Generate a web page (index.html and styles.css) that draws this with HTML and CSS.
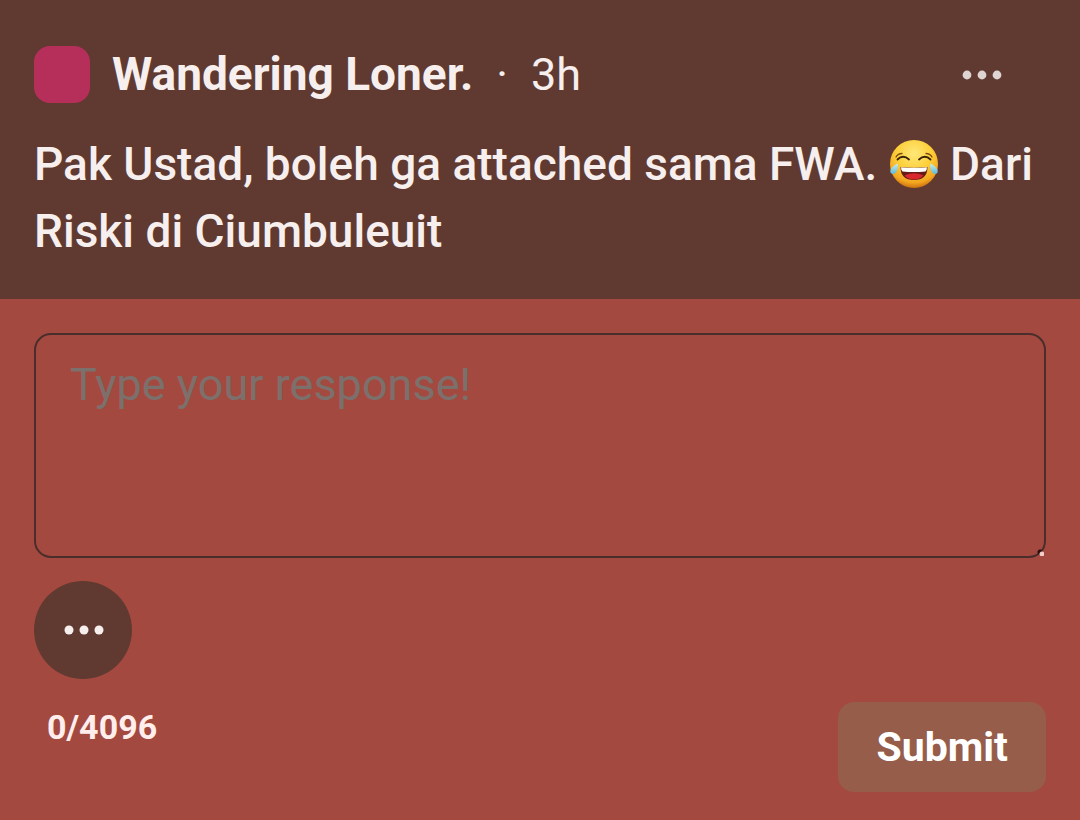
FILE: index.html
```
<!DOCTYPE html>
<html lang="id">
<head>
  <meta charset="UTF-8">
  <meta name="viewport" content="width=device-width, initial-scale=1.0">
  <title>Wandering Loner.</title>
  <link rel="stylesheet" href="styles.css">
</head>
<body>
  <article class="message">
    <header class="message-header">
      <span class="avatar"></span>
      <span class="author">Wandering Loner.</span>
      <span class="separator">·</span>
      <time class="time">3h</time>
      <button class="menu-button" type="button" aria-label="More">
        <svg class="dots" viewBox="0 0 40 10" aria-hidden="true">
          <circle cx="5" cy="5" r="4.4"/><circle cx="20" cy="5" r="4.4"/><circle cx="35" cy="5" r="4.4"/>
        </svg>
      </button>
    </header>
    <p class="message-text">Pak Ustad, boleh ga attached sama FWA. <svg class="emoji" viewBox="0 0 50 50" role="img" aria-label="Tears of joy">
        <defs>
          <radialGradient id="face" cx="50%" cy="28%" r="72%">
            <stop offset="0" stop-color="#ffe87a"/>
            <stop offset="0.5" stop-color="#fdcf38"/>
            <stop offset="0.85" stop-color="#f3a51f"/>
            <stop offset="1" stop-color="#c9700f"/>
          </radialGradient>
          <linearGradient id="tear" x1="0" y1="0" x2="0" y2="1">
            <stop offset="0" stop-color="#c8eef2"/>
            <stop offset="1" stop-color="#5fb9d6"/>
          </linearGradient>
        </defs>
        <circle cx="25" cy="25" r="24" fill="url(#face)"/>
        <path d="M7 18Q9 14.500 13 14.500M37 14.500Q41 14.500 43 18" fill="none" stroke="#7a4a10" stroke-width="1.300" stroke-linecap="round"/>
        <path d="M8.500 20.500Q14 15 20 20.500M30 20.500Q36 15 41.500 20.500" fill="none" stroke="#38210b" stroke-width="1.800" stroke-linecap="round"/>
        <path d="M11.500 28Q25 29.500 38.500 28Q38.500 41 25 41Q11.500 41 11.500 28Z" fill="#651b16"/>
        <path d="M15.500 36.500Q25 32 34.500 36.500Q31 40.500 25 40.500Q19 40.500 15.500 36.500Z" fill="#d8272d"/>
        <path d="M12 28.200Q25 29.500 38 28.200Q38 31 36.500 32.500Q25 33.500 13.500 32.500Q12 31 12 28.200Z" fill="#fff"/>
        <path d="M9 24.500Q9 34 4.500 35Q0.500 35 1.500 31Q3 27 9 24.500ZM41 24.500Q41 34 45.500 35Q49.500 35 48.500 31Q47 27 41 24.500Z" fill="url(#tear)"/>
      </svg> Dari Riski di Ciumbuleuit</p>
  </article>

  <form class="response">
    <textarea class="response-input" placeholder="Type your response!" aria-label="Response" maxlength="4096"></textarea>
    <button class="options-button" type="button" aria-label="Options">
      <svg class="dots" viewBox="0 0 40 10" aria-hidden="true">
        <circle cx="5" cy="5" r="4.5"/><circle cx="20" cy="5" r="4.5"/><circle cx="35" cy="5" r="4.5"/>
      </svg>
    </button>
    <div class="response-footer">
      <span class="counter">0/4096</span>
      <button class="submit-button" type="button">Submit</button>
    </div>
  </form>
</body>
</html>
```
FILE: styles.css
```
* {
  box-sizing: border-box;
}
body {
  margin: 0;
  min-height: 100vh;
  background: #a4493f;
  color: #f6efee;
  font-family: Roboto, sans-serif;
  font-size: 45px;
}
button {
  border: none;
  padding: 0;
  color: inherit;
  font-family: inherit;
  cursor: pointer;
}
.message {
  background: #603a31;
  padding: 46px 34px 34px;
}
.message-header {
  display: flex;
  align-items: center;
  line-height: 57px;
}
.avatar {
  width: 56px;
  height: 57px;
  margin-right: 22px;
  border-radius: 16px;
  background: #b62f5b;
}
.author {
  font-size: 46px;
  font-weight: 700;
}
.separator {
  margin: 0 23px;
}
.menu-button {
  margin-left: auto;
  margin-right: 44px;
  display: flex;
  background: none;
  color: #ded4d2;
}
.dots {
  width: 40px;
  height: 10px;
  fill: currentColor;
}
.message-text {
  margin: 28px 0 0;
  font-size: 46px;
  font-weight: 500;
  line-height: 67px;
}
.emoji {
  width: 50px;
  height: 50px;
  vertical-align: -9px;
}
.response {
  padding: 34px;
}
.response-input {
  display: block;
  width: 100%;
  height: 225px;
  padding: 23px 34px;
  border: 2px solid #4a2e2c;
  border-radius: 17px;
  background: transparent;
  color: inherit;
  font: inherit;
  resize: vertical;
}
.response-input::placeholder {
  color: #7c706c;
}
.response-input::-webkit-resizer {
  background:
    radial-gradient(circle at right 2px bottom 2px, #f3cdc8 2px, transparent 3px),
    radial-gradient(circle at right 4px bottom 4px, #2a0d0c 2px, transparent 3px);
}
.options-button {
  display: flex;
  align-items: center;
  justify-content: center;
  width: 98px;
  height: 98px;
  margin-top: 23px;
  padding-left: 2px;
  border-radius: 50%;
  background: #603a31;
}
.response-footer {
  display: flex;
  justify-content: space-between;
  align-items: flex-start;
  margin-top: 23px;
}
.counter {
  padding: 5px 13px;
  color: #ffeeec;
  font-size: 34px;
  font-weight: 700;
}
.submit-button {
  height: 90px;
  padding: 0 38px;
  border-radius: 16px;
  background: #955d4a;
  color: #fff;
  font-size: 41px;
  font-weight: 700;
}
```
